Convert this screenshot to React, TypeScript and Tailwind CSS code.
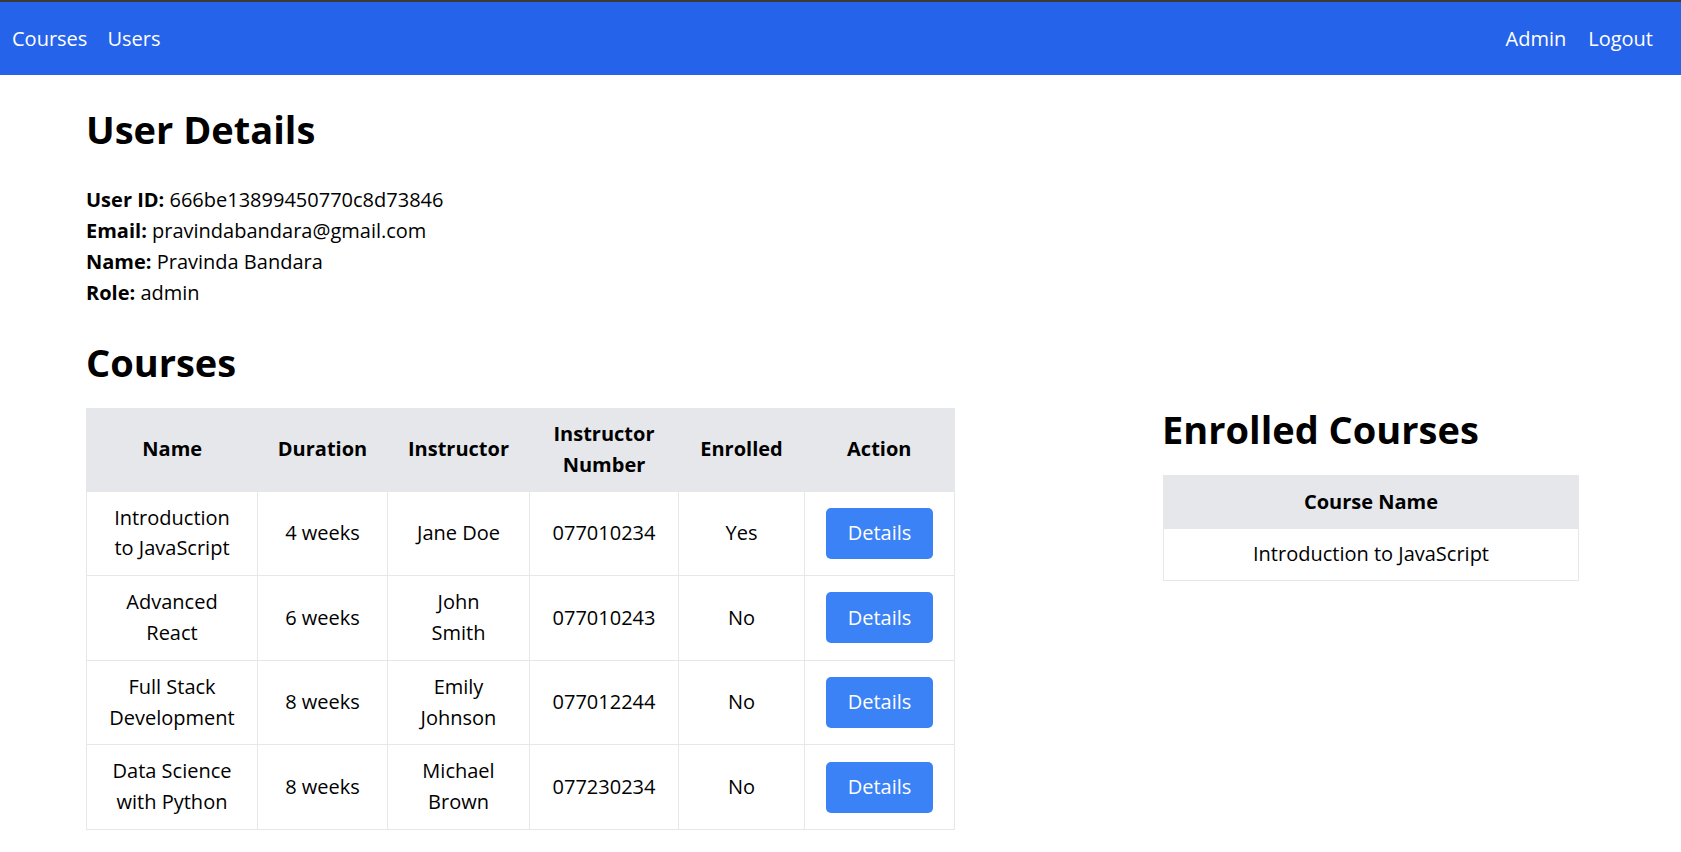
import React from "react";

const courses = [
  { name: "Introduction to JavaScript", duration: "4 weeks", instructor: "Jane Doe", number: "077010234", enrolled: "Yes" },
  { name: "Advanced React", duration: "6 weeks", instructor: "John Smith", number: "077010243", enrolled: "No" },
  { name: "Full Stack Development", duration: "8 weeks", instructor: "Emily Johnson", number: "077012244", enrolled: "No" },
  { name: "Data Science with Python", duration: "8 weeks", instructor: "Michael Brown", number: "077230234", enrolled: "No" },
];

export default function App() {
  return (
    <div className="min-h-screen bg-white text-black" style={{ fontFamily: '"Open Sans", "Noto Sans", sans-serif' }}>
      <nav className="border-t-2 border-[#3a3a3a] bg-[#2563eb] h-[75px] flex items-center justify-between pl-[12px] pr-[28px] text-white text-[20px]">
        <div className="flex gap-[20px]">
          <a className="cursor-pointer">Courses</a>
          <a className="cursor-pointer">Users</a>
        </div>
        <div className="flex gap-[22px]">
          <a className="cursor-pointer">Admin</a>
          <a className="cursor-pointer">Logout</a>
        </div>
      </nav>

      <main className="pl-[86px] pr-[102px] pt-[32px]">
        <h1 className="text-[38px] leading-[44px] font-bold">User Details</h1>
        <div className="mt-[33px] text-[20px] leading-[31px]">
          <p><span className="font-bold">User ID:</span> 666be13899450770c8d73846</p>
          <p><span className="font-bold">Email:</span> pravindabandara@gmail.com</p>
          <p><span className="font-bold">Name:</span> Pravinda Bandara</p>
          <p><span className="font-bold">Role:</span> admin</p>
        </div>

        <div className="flex justify-between mt-[32px]">
          <section className="w-[868px]">
            <h2 className="text-[38px] leading-[44px] font-bold mb-[24px]">Courses</h2>
            <table className="w-[868px] table-fixed border-collapse border border-[#e5e7eb] text-[20px] leading-[30.8px] text-center">
              <colgroup>
                <col className="w-[171px]" />
                <col className="w-[130px]" />
                <col className="w-[142px]" />
                <col className="w-[149px]" />
                <col className="w-[126px]" />
                <col className="w-[150px]" />
              </colgroup>
              <thead className="bg-[#e5e7eb]">
                <tr>
                  <th className="px-[14px] py-[10px] font-bold">Name</th>
                  <th className="px-[14px] py-[10px] font-bold">Duration</th>
                  <th className="px-[14px] py-[10px] font-bold">Instructor</th>
                  <th className="px-[14px] py-[10px] font-bold">Instructor Number</th>
                  <th className="px-[14px] py-[10px] font-bold">Enrolled</th>
                  <th className="px-[14px] py-[10px] font-bold">Action</th>
                </tr>
              </thead>
              <tbody>
                {courses.map((c) => (
                  <tr key={c.name}>
                    <td className="border border-[#e5e7eb] px-[22px] py-[11px]">{c.name}</td>
                    <td className="border border-[#e5e7eb] px-[22px] py-[11px]">{c.duration}</td>
                    <td className="border border-[#e5e7eb] px-[22px] py-[11px]">{c.instructor}</td>
                    <td className="border border-[#e5e7eb] px-[22px] py-[11px]">{c.number}</td>
                    <td className="border border-[#e5e7eb] px-[22px] py-[11px]">{c.enrolled}</td>
                    <td className="border border-[#e5e7eb] px-[14px] py-[11px]">
                      <button className="w-[107px] h-[51px] rounded-[5px] bg-[#3b82f6] text-white text-[20px]">Details</button>
                    </td>
                  </tr>
                ))}
              </tbody>
            </table>
          </section>

          <section className="w-[416px] mt-[67px]">
            <h2 className="text-[38px] leading-[44px] font-bold mb-[24px] -ml-[1px]">Enrolled Courses</h2>
            <table className="w-[416px] border-collapse border border-[#e5e7eb] text-[20px] leading-[30.8px] text-center">
              <thead className="bg-[#e5e7eb]">
                <tr>
                  <th className="px-[14px] py-[10.5px] font-bold">Course Name</th>
                </tr>
              </thead>
              <tbody>
                <tr>
                  <td className="border border-[#e5e7eb] px-[14px] py-[10px]">Introduction to JavaScript</td>
                </tr>
              </tbody>
            </table>
          </section>
        </div>
      </main>
    </div>
  );
}
